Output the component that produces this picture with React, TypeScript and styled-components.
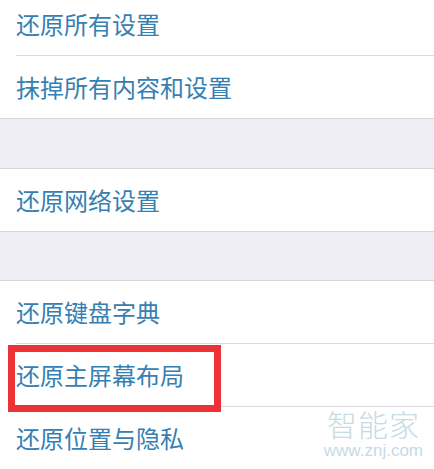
import React from 'react';
import styled, { createGlobalStyle } from 'styled-components';

const GlobalStyle = createGlobalStyle`
	html, body {
		margin: 0;
		padding: 0;
		background: #ffffff;
		overflow: hidden;
	}
	body {
		font-family: "Noto Sans CJK SC", "Noto Sans", sans-serif;
	}
`;

const sections: string[][] = [
	['还原所有设置', '抹掉所有内容和设置'],
	['还原网络设置'],
	['还原键盘字典', '还原主屏幕布局', '还原位置与隐私']
];

const App = () => {
	return (
		<>
			<GlobalStyle />
			<Page>
				{sections.map((items, i) => (
					<React.Fragment key={i}>
						{i > 0 && <Spacer />}
						<Group>
							{items.map((label) => (
								<Row key={label}>
									<RowInner>
										<Label>{label}</Label>
									</RowInner>
									{label === '还原主屏幕布局' && <Highlight />}
								</Row>
							))}
						</Group>
					</React.Fragment>
				))}
				<Watermark>
					<WatermarkTitle>智能家</WatermarkTitle>
					<WatermarkUrl>www.znj.com</WatermarkUrl>
				</Watermark>
			</Page>
		</>
	);
};

export default App;

const Page = styled.div`
	position: relative;
	width: 434px;
	height: 478px;
	margin-top: -8px;
	overflow: hidden;
	background: #efeff4;
	display: flex;
	flex-direction: column;
`;

const Group = styled.div`
	background: #ffffff;
	border-top: 1px solid #d6d6da;
	border-bottom: 1px solid #d6d6da;
	&:last-of-type {
		flex: 1;
		border-bottom: none;
	}
`;

const Spacer = styled.div`
	height: 49px;
	background: #efeef4;
`;

const Row = styled.div`
	position: relative;
	padding-left: 16px;
	&:last-child > div {
		border-bottom: none;
	}
`;

const RowInner = styled.div`
	height: 62px;
	display: flex;
	align-items: center;
	border-bottom: 1px solid #dcdce0;
`;

const Label = styled.span`
	font-size: 24px;
	color: #3580b2;
	line-height: 1;
`;

const Highlight = styled.div`
	position: absolute;
	left: 8px;
	top: 1px;
	width: 213px;
	height: 67px;
	box-sizing: border-box;
	border: 7px solid #ec3237;
	pointer-events: none;
`;

const Watermark = styled.div`
	position: absolute;
	right: 11px;
	bottom: 10px;
	display: flex;
	flex-direction: column;
	align-items: center;
	color: #c6dbe3;
`;

const WatermarkTitle = styled.div`
	font-size: 30px;
	line-height: 30px;
	font-weight: 300;
	letter-spacing: 1px;
`;

const WatermarkUrl = styled.div`
	font-family: "Liberation Sans", Arial, sans-serif;
	font-size: 17px;
	line-height: 18px;
	margin-top: 4px;
`;
